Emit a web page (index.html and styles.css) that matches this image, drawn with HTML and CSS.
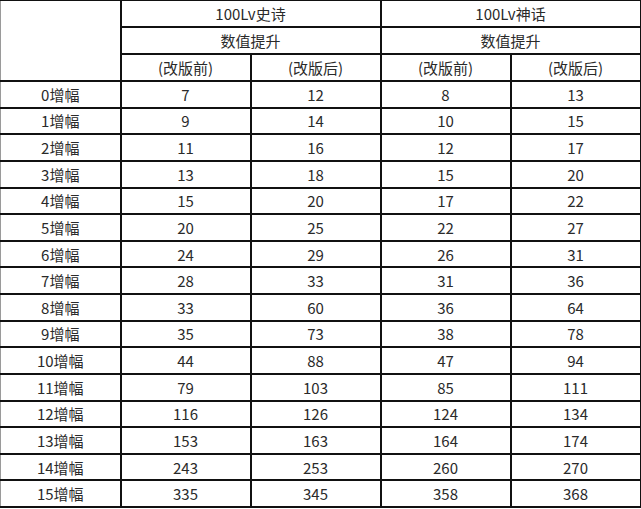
FILE: index.html
```html
<!DOCTYPE html>
<html lang="zh-CN">
<head>
<meta charset="utf-8">
<title>100Lv 增幅数值</title>
<link rel="stylesheet" href="styles.css">
</head>
<body>
<table class="tbl">
  <colgroup>
    <col class="c-first"><col class="c-val"><col class="c-val"><col class="c-val"><col class="c-val">
  </colgroup>
  <thead>
    <tr class="hrow"><td rowspan="3"></td><td colspan="2">100Lv史诗</td><td colspan="2">100Lv神话</td></tr>
    <tr class="hrow"><td colspan="2">数值提升</td><td colspan="2">数值提升</td></tr>
    <tr class="hrow"><td>(改版前)</td><td>(改版后)</td><td>(改版前)</td><td>(改版后)</td></tr>
  </thead>
  <tbody>
    <tr><td>0增幅</td><td>7</td><td>12</td><td>8</td><td>13</td></tr>
    <tr><td>1增幅</td><td>9</td><td>14</td><td>10</td><td>15</td></tr>
    <tr><td>2增幅</td><td>11</td><td>16</td><td>12</td><td>17</td></tr>
    <tr><td>3增幅</td><td>13</td><td>18</td><td>15</td><td>20</td></tr>
    <tr><td>4增幅</td><td>15</td><td>20</td><td>17</td><td>22</td></tr>
    <tr><td>5增幅</td><td>20</td><td>25</td><td>22</td><td>27</td></tr>
    <tr><td>6增幅</td><td>24</td><td>29</td><td>26</td><td>31</td></tr>
    <tr><td>7增幅</td><td>28</td><td>33</td><td>31</td><td>36</td></tr>
    <tr><td>8增幅</td><td>33</td><td>60</td><td>36</td><td>64</td></tr>
    <tr><td>9增幅</td><td>35</td><td>73</td><td>38</td><td>78</td></tr>
    <tr><td>10增幅</td><td>44</td><td>88</td><td>47</td><td>94</td></tr>
    <tr><td>11增幅</td><td>79</td><td>103</td><td>85</td><td>111</td></tr>
    <tr><td>12增幅</td><td>116</td><td>126</td><td>124</td><td>134</td></tr>
    <tr><td>13增幅</td><td>153</td><td>163</td><td>164</td><td>174</td></tr>
    <tr><td>14增幅</td><td>243</td><td>253</td><td>260</td><td>270</td></tr>
    <tr><td>15增幅</td><td>335</td><td>345</td><td>358</td><td>368</td></tr>
  </tbody>
</table>
</body>
</html>
```

FILE: styles.css
```css
html, body {
  margin: 0;
  padding: 0;
  background: #ffffff;
}

.tbl {
  width: 640px;
  margin-top: -1px;
  border-collapse: collapse;
  table-layout: fixed;
  font-family: "Noto Sans CJK SC", "Noto Sans", sans-serif;
  font-size: 15px;
  color: #2a2a2a;
}

.c-first { width: 120px; }
.c-val { width: 130px; }

.tbl td {
  border: 2px solid #111111;
  padding: 0;
  text-align: center;
  vertical-align: middle;
  line-height: 1;
}

.tbl tr.hrow td {
  height: 25px;
}

.tbl tbody td {
  height: 24.625px;
}

.tbl tr:first-child td:first-child,
.tbl tbody td:first-child {
  border-left-color: #9a9a9a;
  border-left-width: 1px;
}
```
